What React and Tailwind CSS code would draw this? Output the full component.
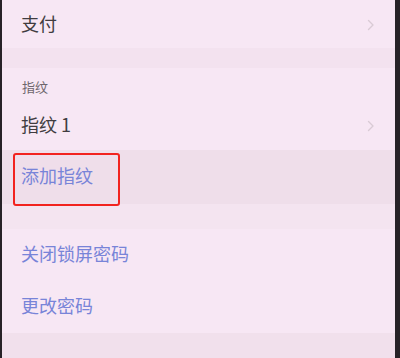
import React from "react";

const font = { fontFamily: '"Noto Sans CJK SC", "Noto Sans", sans-serif' };

function Chevron() {
  return (
    <svg width="8" height="12" viewBox="0 0 8 12" className="mr-[20px]" aria-hidden="true">
      <path d="M1.5 1.5 6 6l-4.5 4.5" fill="none" stroke="#d9cbd5" strokeWidth="1.4" strokeLinecap="round" strokeLinejoin="round" />
    </svg>
  );
}

function Row({ text, height, blue, arrow, className = "" }) {
  return (
    <div className={`flex items-center justify-between pl-[19px] ${height} ${className}`}>
      <span className={`pb-[3px] text-[18px] ${blue ? "text-[#7884d8]" : "text-[#403c40]"}`}>{text}</span>
      {arrow && <Chevron />}
    </div>
  );
}

export default function App() {
  return (
    <div className="flex h-[358px] w-[400px] overflow-hidden bg-[#272227]" style={font}>
      <div className="relative ml-[2px] mr-[5px] flex flex-1 flex-col bg-[#f7e7f4]">
        <Row text="支付" height="h-[48px]" arrow className="pt-[1px]" />
        <div className="h-[20px] bg-[#f3e2ef]" />
        <div className="flex h-[34px] items-center pl-[20px] pt-[4px] text-[13px] text-[#6e666c]">指纹</div>
        <Row text="指纹 1" height="h-[48px]" arrow />
        <Row text="添加指纹" height="h-[54px]" blue className="bg-[#efdeea]" />
        <div className="h-[25px] bg-[#f4e4f0]" />
        <Row text="关闭锁屏密码" height="h-[52px]" blue />
        <Row text="更改密码" height="h-[52px]" blue />
        <div className="flex-1 bg-[#f1e0ec]" />
        <div className="absolute left-[11px] top-[153px] h-[53px] w-[107px] rounded-[3px] border-2 border-[#f2231f]" />
      </div>
    </div>
  );
}
